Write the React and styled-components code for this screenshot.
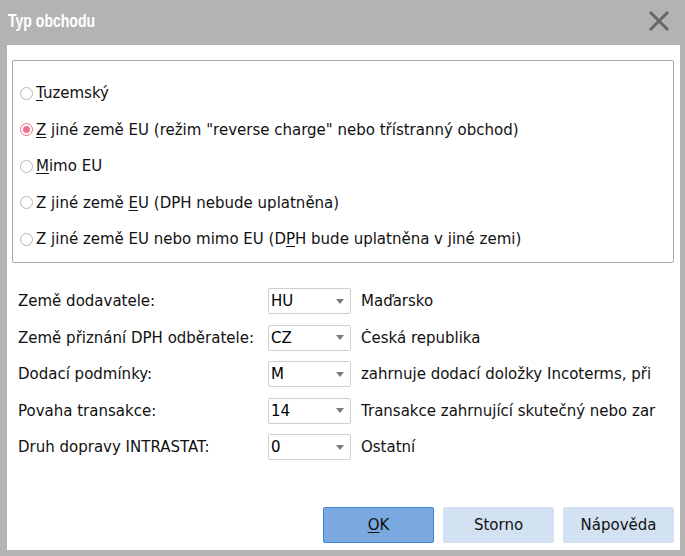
import React, { useState } from "react";
import styled, { createGlobalStyle } from "styled-components";

const GlobalStyle = createGlobalStyle`
  html, body {
    margin: 0;
    padding: 0;
    background: #b3b3b3;
  }
  body {
    font-family: "DejaVu Sans", sans-serif;
  }
`;

const Window = styled.div`
  width: 685px;
  height: 556px;
  background: #b3b3b3;
  display: flex;
  flex-direction: column;
  box-sizing: border-box;
`;

const TitleBar = styled.div`
  height: 45px;
  display: flex;
  align-items: center;
  justify-content: space-between;
  padding: 0 14px 3px 8px;
  box-sizing: border-box;
`;

// narrow bold caption, squeezed like the system title font
const Title = styled.span`
  color: #fff;
  font-family: "Liberation Sans", Arial, sans-serif;
  font-weight: bold;
  font-size: 18px;
  display: inline-block;
  transform: scaleX(0.78);
  transform-origin: left center;
`;

const CloseButton = styled.button`
  border: 0;
  background: transparent;
  padding: 0;
  width: 24px;
  height: 24px;
  display: flex;
  align-items: center;
  justify-content: center;
  cursor: pointer;
`;

const Body = styled.div`
  flex: 1;
  margin: 0 5px 6px 7px;
  background: #fff;
  display: flex;
  flex-direction: column;
  padding: 15px 6px 7px 5px;
  box-sizing: border-box;
  font-size: 15px;
  color: #111;
`;

const GroupBox = styled.div`
  height: 203px;
  border: 1px solid #a9a9a9;
  border-radius: 2px;
  padding: 14px 0 0 7px;
  box-sizing: border-box;
  display: flex;
  flex-direction: column;
`;

const RadioRow = styled.label`
  height: 36.5px;
  display: flex;
  align-items: center;
  gap: 3px;
  cursor: pointer;
`;

const RadioMark = styled.span`
  width: 11px;
  height: 11px;
  border-radius: 50%;
  border: 1px solid ${(p) => (p.$on ? "#f0708a" : "#b5b5b5")};
  background: #fff;
  display: flex;
  align-items: center;
  justify-content: center;
  flex: none;

  &::after {
    content: "";
    width: 7px;
    height: 7px;
    border-radius: 50%;
    background: ${(p) => (p.$on ? "#f0708a" : "transparent")};
  }
`;

const Key = styled.span`
  text-decoration: underline;
  text-underline-offset: 2px;
`;

const Form = styled.div`
  display: grid;
  grid-template-columns: 250px 93px 1fr;
  grid-auto-rows: 36.5px;
  align-items: center;
  margin-top: 20px;
  padding-left: 6px;
`;

const FieldLabel = styled.span`
  white-space: nowrap;
`;

const Select = styled.div`
  width: 83px;
  height: 26px;
  box-sizing: border-box;
  border: 1px solid #cfcfcf;
  border-radius: 2px;
  display: flex;
  align-items: center;
  justify-content: space-between;
  padding: 0 6px 0 2px;
  color: #000;
`;

const Arrow = styled.span`
  width: 0;
  height: 0;
  border-left: 4px solid transparent;
  border-right: 4px solid transparent;
  border-top: 5px solid #7a7a7a;
`;

const Description = styled.span`
  white-space: nowrap;
  overflow: hidden;
`;

const ButtonRow = styled.div`
  margin-top: auto;
  display: flex;
  justify-content: flex-end;
  gap: 9px;
`;

const Button = styled.button`
  width: 111px;
  height: 36px;
  box-sizing: border-box;
  font-family: inherit;
  font-size: 15px;
  color: #111;
  border-radius: 2px;
  border: 1px solid ${(p) => (p.$primary ? "#3d82d4" : "#d3e2f3")};
  background: ${(p) => (p.$primary ? "#7aa9df" : "#d3e2f3")};
  cursor: pointer;
`;

const tradeTypes = [
  { id: "tuz", text: [<Key key="k">T</Key>, "uzemský"] },
  { id: "eu", text: [<Key key="k">Z</Key>, ' jiné země EU (režim "reverse charge" nebo třístranný obchod)'] },
  { id: "mimo", text: [<Key key="k">M</Key>, "imo EU"] },
  { id: "eu-nodph", text: ["Z jiné země ", <Key key="k">E</Key>, "U (DPH nebude uplatněna)"] },
  { id: "eu-jina", text: ["Z jiné země EU nebo mimo EU (D", <Key key="k">P</Key>, "H bude uplatněna v jiné zemi)"] },
];

const fields = [
  { label: "Země dodavatele:", value: "HU", desc: "Maďarsko" },
  { label: "Země přiznání DPH odběratele:", value: "CZ", desc: "Česká republika" },
  { label: "Dodací podmínky:", value: "M", desc: "zahrnuje dodací doložky Incoterms, při" },
  { label: "Povaha transakce:", value: "14", desc: "Transakce zahrnující skutečný nebo zar" },
  { label: "Druh dopravy INTRASTAT:", value: "0", desc: "Ostatní" },
];

export default function App() {
  const [selected, setSelected] = useState("eu");

  return (
    <Window>
      <GlobalStyle />
      <TitleBar>
        <Title>Typ obchodu</Title>
        <CloseButton aria-label="Zavřít">
          <svg width="22" height="22" viewBox="0 0 22 22">
            <path d="M2 2 L20 20 M20 2 L2 20" stroke="#666" strokeWidth="3" />
          </svg>
        </CloseButton>
      </TitleBar>
      <Body>
        <GroupBox>
          {tradeTypes.map((t) => (
            <RadioRow key={t.id} onClick={() => setSelected(t.id)}>
              <RadioMark $on={selected === t.id} />
              <span>{t.text}</span>
            </RadioRow>
          ))}
        </GroupBox>
        <Form>
          {fields.map((f) => (
            <React.Fragment key={f.label}>
              <FieldLabel>{f.label}</FieldLabel>
              <Select>
                {f.value}
                <Arrow />
              </Select>
              <Description>{f.desc}</Description>
            </React.Fragment>
          ))}
        </Form>
        <ButtonRow>
          <Button $primary>
            <Key>O</Key>K
          </Button>
          <Button>Storno</Button>
          <Button>Nápověda</Button>
        </ButtonRow>
      </Body>
    </Window>
  );
}
